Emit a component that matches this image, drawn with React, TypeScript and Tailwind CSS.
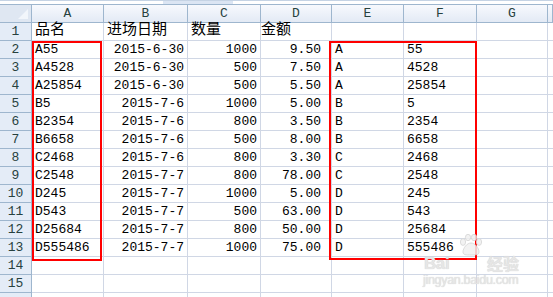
import React from "react";

const cols = ["A", "B", "C", "D", "E", "F", "G", ""];
const widths = ["w-[72px]", "w-[84px]", "w-[73px]", "w-[71px]", "w-[72px]", "w-[73px]", "w-[71px]", "flex-1"];

type Row = [string, string, string, string, string, string];

const rows: Row[] = [
  ["品名", "进场日期", "数量", "金额", "", ""],
  ["A55", "2015-6-30", "1000", "9.50", "A", "55"],
  ["A4528", "2015-6-30", "500", "7.50", "A", "4528"],
  ["A25854", "2015-6-30", "500", "5.50", "A", "25854"],
  ["B5", "2015-7-6", "1000", "5.00", "B", "5"],
  ["B2354", "2015-7-6", "800", "3.50", "B", "2354"],
  ["B6658", "2015-7-6", "500", "8.00", "B", "6658"],
  ["C2468", "2015-7-6", "800", "3.30", "C", "2468"],
  ["C2548", "2015-7-7", "800", "78.00", "C", "2548"],
  ["D245", "2015-7-7", "1000", "5.00", "D", "245"],
  ["D543", "2015-7-7", "500", "63.00", "D", "543"],
  ["D25684", "2015-7-7", "800", "50.00", "D", "25684"],
  ["D555486", "2015-7-7", "1000", "75.00", "D", "555486"],
  ["", "", "", "", "", ""],
  ["", "", "", "", "", ""],
  ["", "", "", "", "", ""],
];

const font = "font-['Liberation_Mono','Noto_Sans_CJK_SC',monospace]";

function Cell({ i, value, header }: { i: number; value: string; header: boolean }) {
  // row 1 holds the column titles, left aligned like text
  const right = !header && (i === 1 || i === 2 || i === 3);
  const pad = i === 3 ? "pr-[10px]" : right ? "pr-[3px]" : "pl-[3px]";
  const size = header ? "text-[15px]" : "text-[13px]";
  return (
    <div
      className={`${widths[i]} shrink-0 h-full border-r border-b border-[#d0d7e5] flex items-center ${
        right ? "justify-end" : "justify-start"
      } ${pad} ${size} text-black whitespace-nowrap overflow-visible`}
    >
      {value}
    </div>
  );
}

function Watermark() {
  return (
    <>
      <svg
        width="28"
        height="22"
        viewBox="0 0 26 22"
        className="absolute left-[456px] top-[234px] pointer-events-none"
      >
        <g fill="#f0f0f0" fillOpacity="0.85" stroke="#d4d4d4" strokeWidth="0.8">
          <ellipse cx="6" cy="8" rx="2.6" ry="3.4" />
          <ellipse cx="11" cy="3.5" rx="2.6" ry="3.2" />
          <ellipse cx="17" cy="3.5" rx="2.6" ry="3.2" />
          <ellipse cx="22" cy="8" rx="2.6" ry="3.4" />
          <path d="M14 9c-4 0-8 5-8 9 0 3 3 3 8 3s8 0 8-3c0-4-4-9-8-9z" />
        </g>
      </svg>
      <div className="absolute left-[424px] top-[255px] text-[17px] font-bold leading-none tracking-tight text-[#e6e6e6] font-['Liberation_Sans',sans-serif] [text-shadow:0_0_1px_#c8c8c8] pointer-events-none">
        Bai
      </div>
      <div className="absolute left-[487px] top-[255px] text-[16px] font-bold leading-none text-[#e6e6e6] font-['Noto_Sans_CJK_SC',sans-serif] [text-shadow:0_0_1px_#c8c8c8] pointer-events-none">
        经验
      </div>
      <div className="absolute left-[423px] top-[274px] text-[12.5px] leading-none tracking-tight text-[#e6e6e6] font-['Liberation_Sans',sans-serif] [text-shadow:0_0_1px_#c8c8c8] pointer-events-none">
        jingyan.baidu.com
      </div>
    </>
  );
}

export default function App() {
  return (
    <div className={`relative w-[553px] h-[297px] overflow-hidden bg-white ${font}`}>
      {/* top strip */}
      <div className="h-[5px] bg-white border-t border-[#c5d3e4] border-b border-b-[#9eb6ce] flex">
        <div className="ml-[163px] w-[70px] bg-[#dbe5f3]" />
      </div>

      {/* column headers */}
      <div className="flex h-[18px]">
        <div className="w-[32px] shrink-0 h-full bg-[#dfe7f2] border-r border-b border-[#9eb6ce] relative">
          <div className="absolute right-[3px] bottom-[3px] w-0 h-0 border-l-[10px] border-l-transparent border-b-[10px] border-b-[#f2f6fb]" />
        </div>
        {cols.map((c, i) => (
          <div
            key={i}
            className={`${widths[i]} shrink-0 h-full bg-gradient-to-b from-[#f7f9fd] to-[#e3eaf5] border-r border-b border-[#9eb6ce] flex items-center justify-center text-[13px] text-[#27413e]`}
          >
            {c}
          </div>
        ))}
      </div>

      {/* data rows */}
      {rows.map((r, ri) => (
        <div key={ri} className="flex h-[18px]">
          <div className="w-[32px] shrink-0 h-full bg-[#e4ecf7] border-r border-b border-[#9eb6ce] flex items-center justify-center text-[13px] text-[#27413e]">
            {ri < 15 ? ri + 1 : ""}
          </div>
          {r.map((v, ci) => (
            <Cell key={ci} i={ci} value={v} header={ri === 0} />
          ))}
          <div className={`${widths[6]} shrink-0 h-full border-r border-b border-[#d0d7e5]`} />
          <div className="flex-1 h-full border-b border-[#d0d7e5]" />
        </div>
      ))}

      {/* red selection boxes */}
      <div className="absolute left-[32px] top-[41px] w-[70px] h-[220px] border-[2.5px] border-[#ff0000]" />
      <div className="absolute left-[329px] top-[41px] w-[148px] h-[219px] border-[2.5px] border-[#ff0000]" />

      <Watermark />
    </div>
  );
}
